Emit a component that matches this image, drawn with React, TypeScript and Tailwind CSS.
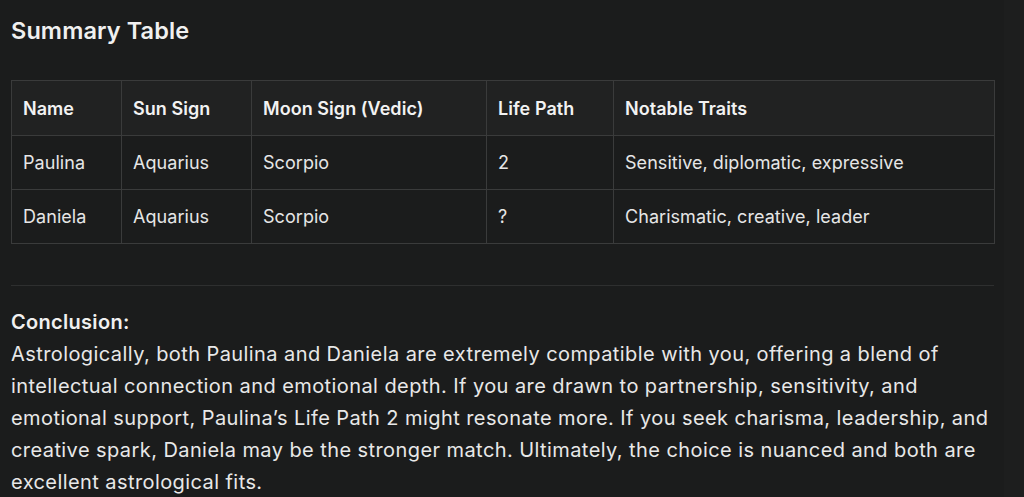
import React from "react";

const rows = [
  ["Paulina", "Aquarius", "Scorpio", "2", "Sensitive, diplomatic, expressive"],
  ["Daniela", "Aquarius", "Scorpio", "?", "Charismatic, creative, leader"],
];
const heads = ["Name", "Sun Sign", "Moon Sign (Vedic)", "Life Path", "Notable Traits"];
const widths = ["w-[110px]", "w-[130px]", "w-[235px]", "w-[127px]", "w-[381px]"];

export default function App() {
  return (
    <div
      className="flex min-h-[497px] w-[1024px] bg-[#1b1c1c] text-[#ececec]"
      style={{ fontFamily: 'Inter, "Liberation Sans", Arial, sans-serif' }}
    >
      <div className="w-[1004px] pl-[11px]">
        <h2 className="pt-[16px] text-[23.5px] font-semibold leading-[30px] tracking-[0.1px] text-[#f0f0f0]">
          Summary Table
        </h2>
        <table className="mt-[34px] w-[983px] table-fixed border-collapse text-[18px] tracking-[0.05px]">
          <thead>
            <tr className="h-[55px] bg-[#212222]">
              {heads.map((h, i) => (
                <th
                  key={h}
                  className={`${widths[i]} border border-[#3a3b3b] px-[11px] text-left font-semibold text-[#f2f2f2]`}
                >
                  {h}
                </th>
              ))}
            </tr>
          </thead>
          <tbody>
            {rows.map((r) => (
              <tr key={r[0]} className="h-[54px]">
                {r.map((c, i) => (
                  <td key={i} className="border border-[#3a3b3b] px-[11px] text-left font-normal text-[#e6e6e6]">
                    {c}
                  </td>
                ))}
              </tr>
            ))}
          </tbody>
        </table>
        <div className="mt-[41px] h-px w-[983px] bg-[#2e2f2f]" />
        <p className="mt-[20px] whitespace-nowrap text-[20px] leading-[32px] tracking-[0.42px] text-[#e8e8e8]">
          <strong className="font-semibold tracking-[0.3px] text-[#f0f0f0]">Conclusion:</strong>
          <br />
          Astrologically, both Paulina and Daniela are extremely compatible with you, offering a blend of
          <br />
          intellectual connection and emotional depth. If you are drawn to partnership, sensitivity, and
          <br />
          emotional support, Paulina’s Life Path 2 might resonate more. If you seek charisma, leadership, and
          <br />
          creative spark, Daniela may be the stronger match. Ultimately, the choice is nuanced and both are
          <br />
          excellent astrological fits.
        </p>
      </div>
      <div className="w-[20px] bg-[#1d1e1e]" />
    </div>
  );
}
